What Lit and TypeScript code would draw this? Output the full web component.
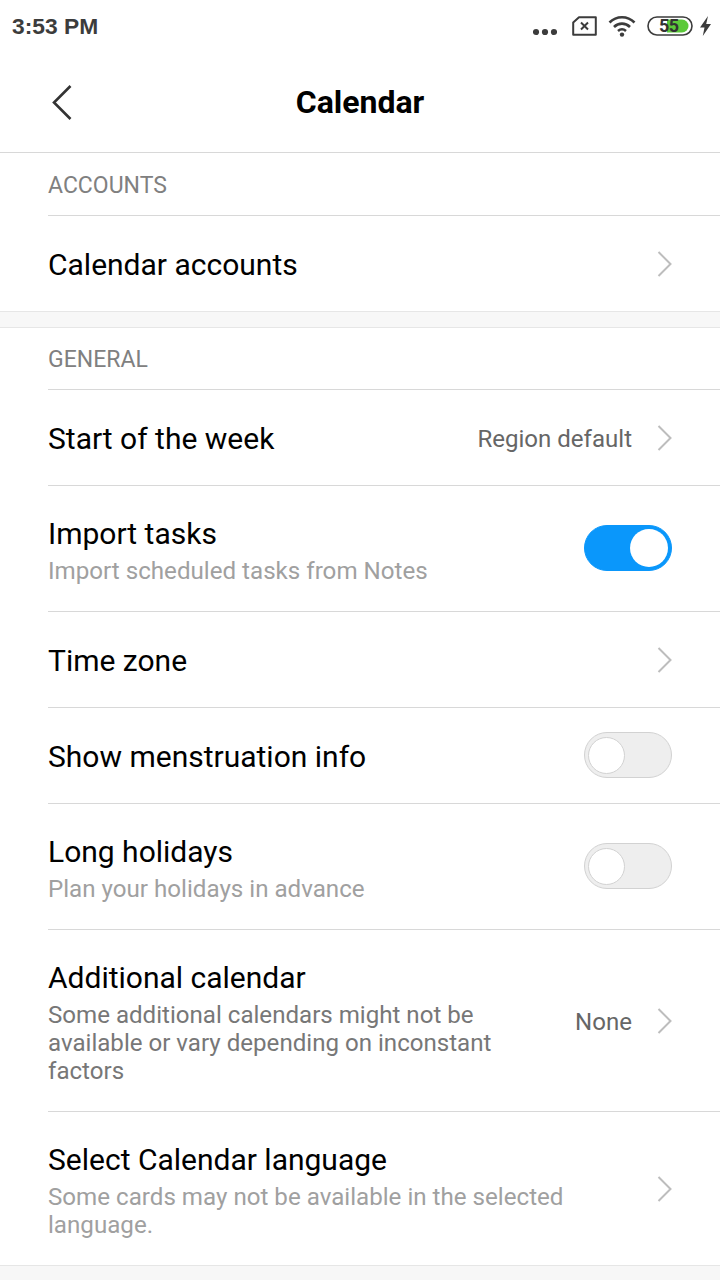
import { LitElement, html, css, nothing } from 'lit';
import { customElement, property } from 'lit/decorators.js';

@customElement('app-switch')
class AppSwitch extends LitElement {
  @property({ type: Boolean }) on = false;

  static styles = css`
    :host {
      display: block;
      flex: none;
      margin-bottom: 1px;
    }
    .track {
      box-sizing: border-box;
      width: 88px;
      height: 46px;
      border-radius: 23px;
      border: 1px solid #d2d2d2;
      background: #eeeeee;
      display: flex;
      align-items: center;
      padding: 0 3px;
    }
    .track.on {
      background: #0a97fb;
      border-color: #0a97fb;
      justify-content: flex-end;
    }
    .knob {
      box-sizing: border-box;
      width: 37px;
      height: 37px;
      border-radius: 50%;
      background: #fff;
      border: 1px solid #d2d2d2;
    }
    .on .knob {
      border: none;
      width: 38px;
      height: 38px;
    }
  `;

  render() {
    return html`<div class="track ${this.on ? 'on' : ''}"><div class="knob"></div></div>`;
  }
}

interface Row {
  title: string;
  sub?: string;
  darkSub?: boolean;
  value?: string;
  toggle?: 'on' | 'off';
  height: number;
}

const general: Row[] = [
  { title: 'Start of the week', value: 'Region default', height: 96 },
  { title: 'Import tasks', sub: 'Import scheduled tasks from Notes', toggle: 'on', height: 126 },
  { title: 'Time zone', height: 96 },
  { title: 'Show menstruation info', toggle: 'off', height: 96 },
  { title: 'Long holidays', sub: 'Plan your holidays in advance', toggle: 'off', height: 126 },
  {
    title: 'Additional calendar',
    sub: 'Some additional calendars might not be available or vary depending on inconstant factors',
    darkSub: true,
    value: 'None',
    height: 182,
  },
  {
    title: 'Select Calendar language',
    sub: 'Some cards may not be available in the selected language.',
    height: 153,
  },
];

@customElement('app-root')
export class AppRoot extends LitElement {
  static styles = css`
    :host {
      display: block;
      width: 720px;
      height: 1280px;
      overflow: hidden;
      background: #f7f7f7;
      font-family: Roboto, 'Noto Sans', sans-serif;
      color: #000;
    }
    .status {
      height: 54px;
      background: #fff;
      display: flex;
      align-items: center;
      justify-content: space-between;
      padding: 0 8px 2px 12px;
      box-sizing: border-box;
      font-family: 'Liberation Sans', sans-serif;
    }
    .time {
      font-size: 22.8px;
      font-weight: 700;
      color: #3c3c3c;
    }
    .status-icons {
      display: flex;
      align-items: center;
      color: #3c3c3c;
    }
    .status-icons svg {
      display: block;
    }
    .dots {
      margin: 12px 15px 0 0;
    }
    .sim {
      margin-right: 11px;
    }
    .battery {
      position: relative;
      width: 46px;
      height: 20px;
      margin: 0 6px 0 11px;
    }
    .battery span {
      position: absolute;
      left: 12px;
      top: 0;
      line-height: 20px;
      font-size: 18px;
      font-weight: 700;
      letter-spacing: -0.5px;
      color: #333;
      font-family: Roboto, sans-serif;
    }
    .header {
      height: 98px;
      background: #fff;
      border-bottom: 1px solid #d8d8d8;
      display: flex;
      align-items: center;
      justify-content: center;
      position: relative;
    }
    .header svg {
      position: absolute;
      left: 50px;
      top: 30px;
    }
    .header h1 {
      margin: 0 0 2px;
      font-size: 32px;
      font-weight: 700;
    }
    .section {
      background: #fff;
      border-bottom: 1px solid #e6e6e6;
    }
    .section + .section {
      margin-top: 15px;
      border-top: 1px solid #e6e6e6;
    }
    .section-label {
      height: 63px;
      box-sizing: border-box;
      margin-left: 48px;
      padding-top: 2px;
      border-bottom: 1px solid #d8d8d8;
      display: flex;
      align-items: center;
      font-size: 23px;
      color: #808080;
    }
    .section + .section .section-label {
      height: 62px;
    }
    .row {
      box-sizing: border-box;
      margin-left: 48px;
      padding-right: 48px;
      display: flex;
      align-items: center;
      border-bottom: 1px solid #d8d8d8;
    }
    .row:last-child {
      border-bottom: none;
    }
    .text {
      flex: 1;
      min-width: 0;
      padding-top: 2px;
    }
    .text.has-sub {
      padding-top: 4px;
    }
    .title {
      font-size: 30px;
      line-height: 36px;
    }
    .sub {
      font-size: 24.15px;
      line-height: 28px;
      color: #a0a0a0;
      margin-top: 5px;
      max-width: 530px;
    }
    .sub.dark {
      font-size: 24.1px;
      color: #777;
      max-width: 470px;
    }
    .value {
      flex: none;
      font-size: 24.05px;
      color: #666;
      margin-right: 24px;
      padding-top: 2px;
    }
    .chevron {
      flex: none;
      display: block;
    }
  `;

  private chevron() {
    return html`<svg class="chevron" width="16" height="28" viewBox="0 0 16 28">
      <path d="M2.5 2 L14.5 14 L2.5 26" fill="none" stroke="#bdbdbd" stroke-width="2" />
    </svg>`;
  }

  private row(r: Row) {
    return html`<div class="row" style="height:${r.height}px">
      <div class="text ${r.sub ? 'has-sub' : ''}">
        <div class="title">${r.title}</div>
        ${r.sub ? html`<div class="sub ${r.darkSub ? 'dark' : ''}">${r.sub}</div>` : nothing}
      </div>
      ${r.value ? html`<div class="value">${r.value}</div>` : nothing}
      ${r.toggle ? html`<app-switch ?on=${r.toggle === 'on'}></app-switch>` : this.chevron()}
    </div>`;
  }

  render() {
    return html`
      <div class="status">
        <div class="time">3:53 PM</div>
        <div class="status-icons">
          <svg class="dots" width="24" height="8" viewBox="0 0 24 8">
            <circle cx="3" cy="4" r="3.1" fill="#3c3c3c" />
            <circle cx="12" cy="4" r="3.1" fill="#3c3c3c" />
            <circle cx="21" cy="4" r="3.1" fill="#3c3c3c" />
          </svg>
          <svg class="sim" width="25" height="20" viewBox="0 0 25 20">
            <path d="M7 1.2 H23.8 V18.8 H1.2 V6.5 Z" fill="none" stroke="#3c3c3c" stroke-width="2" stroke-linejoin="round" />
            <path d="M9 6.5 L16 13.5 M16 6.5 L9 13.5" stroke="#3c3c3c" stroke-width="2" />
          </svg>
          <svg width="28" height="22" viewBox="0 0 28 22">
            <path d="M1.5 7.5 C8.5 0.5 19.5 0.5 26.5 7.5" fill="none" stroke="#3c3c3c" stroke-width="2.6" />
            <path d="M6 12 C10.5 7.5 17.5 7.5 22 12" fill="none" stroke="#3c3c3c" stroke-width="2.6" />
            <path d="M10 16 C12.5 13.8 15.5 13.8 18 16" fill="none" stroke="#3c3c3c" stroke-width="2.6" />
            <circle cx="14" cy="19.6" r="2.2" fill="#3c3c3c" />
          </svg>
          <div class="battery">
            <svg width="46" height="20" viewBox="0 0 46 20">
              <rect x="1" y="1" width="44" height="18" rx="9" fill="#fff" stroke="#3c3c3c" stroke-width="1.6" />
              <path d="M20 3.5 H35 a6.5 6.5 0 0 1 0 13 H20 Z" fill="#5cc93a" />
            </svg>
            <span>55</span>
          </div>
          <svg width="13" height="20" viewBox="0 0 13 20">
            <path d="M9 0 L1 11.5 H5.5 L3.8 20 L12 8 H7.2 Z" fill="#3c3c3c" />
          </svg>
        </div>
      </div>
      <div class="header">
        <svg width="24" height="36" viewBox="0 0 24 36">
          <path d="M20.5 2 L4 18.5 L20.5 35" fill="none" stroke="#333" stroke-width="2.6" />
        </svg>
        <h1>Calendar</h1>
      </div>
      <div class="section">
        <div class="section-label">ACCOUNTS</div>
        ${this.row({ title: 'Calendar accounts', height: 95 })}
      </div>
      <div class="section">
        <div class="section-label">GENERAL</div>
        ${general.map(r => this.row(r))}
      </div>
    `;
  }
}
